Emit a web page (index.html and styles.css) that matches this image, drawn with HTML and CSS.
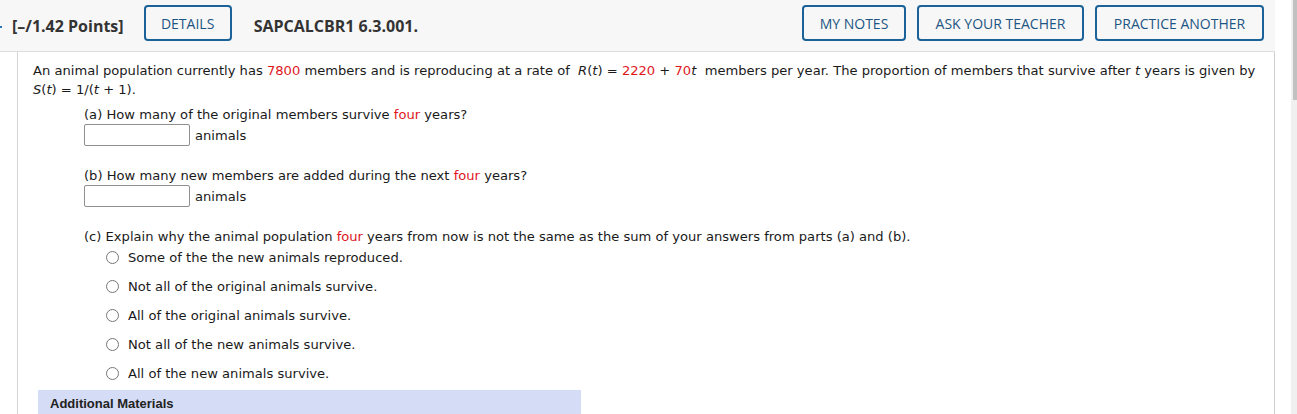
FILE: index.html
```html
<!DOCTYPE html>
<html>
<head>
<meta charset="utf-8">
<link rel="stylesheet" href="styles.css">
</head>
<body>
<div class="page">
  <div class="main">
    <div class="header">
      <span class="dot"></span>
      <span class="points">[&ndash;/1.42 Points]</span>
      <button class="btn btn-details">DETAILS</button>
      <span class="qid">SAPCALCBR1 6.3.001.</span>
      <span class="spacer"></span>
      <button class="btn btn-notes">MY NOTES</button>
      <button class="btn btn-ask">ASK YOUR TEACHER</button>
      <button class="btn btn-practice">PRACTICE ANOTHER</button>
    </div>
    <div class="body">
      <p class="intro">An animal population currently has <span class="red">7800</span> members and is reproducing at a rate of&nbsp; <i>R</i>(<i>t</i>) = <span class="red">2220</span> + <span class="red">70</span><i>t</i>&nbsp; members per year. The proportion of members that survive after <i>t</i> years is given by <br><i>S</i>(<i>t</i>) = 1/(<i>t</i> + 1).</p>
      <div class="part">
        <div class="q">(a) How many of the original members survive <span class="red">four</span> years?</div>
        <div class="answer"><span class="box"></span><span class="unit">animals</span></div>
      </div>
      <div class="part">
        <div class="q">(b) How many new members are added during the next <span class="red">four</span> years?</div>
        <div class="answer"><span class="box"></span><span class="unit">animals</span></div>
      </div>
      <div class="part part-c">
        <div class="q">(c) Explain why the animal population <span class="red">four</span> years from now is not the same as the sum of your answers from parts (a) and (b).</div>
        <div class="options">
          <div class="opt"><span class="radio"></span><span>Some of the the new animals reproduced.</span></div>
          <div class="opt"><span class="radio"></span><span>Not all of the original animals survive.</span></div>
          <div class="opt"><span class="radio"></span><span>All of the original animals survive.</span></div>
          <div class="opt"><span class="radio"></span><span>Not all of the new animals survive.</span></div>
          <div class="opt"><span class="radio"></span><span>All of the new animals survive.</span></div>
        </div>
      </div>
      <div class="materials">Additional Materials</div>
    </div>
  </div>
  <div class="gutter"></div>
  <div class="scrollbar"><div class="thumb"></div></div>
</div>
</body>
</html>
```

FILE: styles.css
```css
* { box-sizing: border-box; }
html, body { margin: 0; padding: 0; background: #fff; }
.page {
  display: flex;
  width: 1297px;
  height: 414px;
  overflow: hidden;
}
.main {
  width: 1275px;
  flex: none;
  display: flex;
  flex-direction: column;
}
.gutter { width: 16px; flex: none; }
.scrollbar {
  width: 6px;
  flex: none;
  background: #f0f0f0;
  display: flex;
  justify-content: flex-end;
}
.thumb { width: 4px; height: 100px; background: #c1c1c1; }

.header {
  height: 52px;
  flex: none;
  background: #f7f7f7;
  border-bottom: 1px solid #dedede;
  display: flex;
  align-items: center;
  padding-right: 11px;
  font-family: "Open Sans", "Noto Sans", sans-serif;
}
.dot {
  width: 2px;
  height: 2px;
  background: #2a78b8;
  margin-right: 10px;
  margin-top: 2px;
}
.points, .qid {
  font-weight: 700;
  font-size: 16px;
  color: #333;
}
.spacer { flex: 1; }
.btn {
  height: 36px;
  border: 2px solid #1a6297;
  border-radius: 4px;
  background: #f7f7f7;
  color: #1d5583;
  font-family: "Open Sans", "Noto Sans", sans-serif;
  font-size: 14px;
  padding: 1px 0 0;
  margin-top: -6px;
}
.btn-details { width: 88px; margin-left: 20px; margin-right: 22px; }
.btn-notes { width: 104px; }
.btn-ask { width: 167px; margin-left: 11px; }
.btn-practice { width: 169px; margin-left: 11px; }

.body {
  flex: 1;
  margin-left: 17px;
  border-left: 1px solid #d4d4d4;
  border-right: 1px solid #cfcfcf;
  padding: 9px 10px 0 15px;
  font-family: "DejaVu Sans", Verdana, sans-serif;
  font-size: 13.1px;
  color: #1a1a1a;
}
.red { color: #e0161d; }
.intro { margin: 0; line-height: 19px; }
.part { margin-left: 51px; }
.part .q { line-height: 18px; margin-top: 7px; }
.answer {
  display: flex;
  align-items: center;
  height: 22px;
}
.box {
  width: 106px;
  height: 22px;
  border: 1px solid #8f8f8f;
  border-radius: 2px;
  background: #fff;
}
.unit { margin-left: 5px; }
.part + .part .q { margin-top: 21px; }
.options {
  margin-left: 22px;
  margin-top: 2px;
  display: flex;
  flex-direction: column;
  gap: 11px;
}
.opt {
  display: flex;
  align-items: center;
  height: 18px;
}
.radio {
  width: 13px;
  height: 13px;
  border: 1px solid #767676;
  border-radius: 50%;
  margin-right: 9px;
  background: #fff;
}
.materials {
  margin-top: 8px;
  margin-left: 5px;
  width: 543px;
  height: 28px;
  background: #d5ddf6;
  font-family: "Liberation Sans", Arial, sans-serif;
  font-weight: 700;
  font-size: 13px;
  color: #222;
  padding: 6px 12px;
}
```
